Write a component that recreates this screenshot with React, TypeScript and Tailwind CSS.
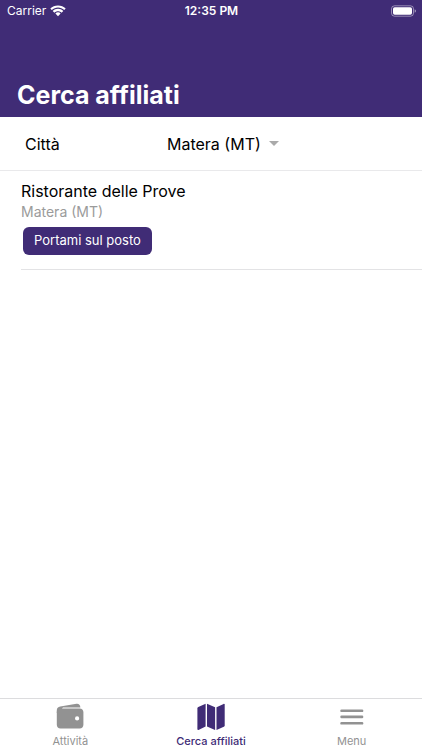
import { ReactNode, useState } from "react";

type Affiliate = {
  id: number;
  name: string;
  city: string;
};

const CITIES = ["Matera (MT)"];

const AFFILIATES: Affiliate[] = [
  { id: 1, name: "Ristorante delle Prove", city: "Matera (MT)" },
];

function WifiIcon() {
  return (
    <svg className="w-4 h-3" viewBox="0 0 16 12" fill="currentColor" aria-hidden="true">
      <path d="M8 .4C5 .4 2.300 1.500.3 3.500l1.500 1.600C3.500 3.500 5.600 2.600 8 2.600s4.500.9 6.200 2.500l1.500-1.600C13.700 1.500 11 .4 8 .4z" />
      <path d="M8 3.700c-2 0-3.800.7-5.300 2.200l1.700 1.800C5.400 6.700 6.600 6.200 8 6.200s2.600.5 3.600 1.500l1.700-1.800C11.800 4.400 10 3.700 8 3.700z" />
      <path d="M8 7.300c-1 0-1.900.4-2.600 1.100L8 11.300l2.600-2.900C9.900 7.700 9 7.300 8 7.300z" />
    </svg>
  );
}

function BatteryIcon() {
  return (
    <svg className="w-[25px] h-3" viewBox="0 0 25 12" aria-hidden="true">
      <rect x=".5" y=".8" width="22" height="10.400" rx="3" fill="none" stroke="#fff" strokeOpacity=".45" />
      <rect x="2" y="2.300" width="19" height="7.400" rx="1.700" fill="#fff" />
      <path d="M23.700 4.300c.8.300 1.200.9 1.200 1.700s-.4 1.400-1.200 1.700z" fill="#fff" fillOpacity=".6" />
    </svg>
  );
}

function WalletIcon() {
  return (
    <svg className="w-7 h-7" viewBox="0 0 28 28" fill="currentColor" aria-hidden="true">
      <path d="M.8 10V7.300c0-2.200 1.300-3.500 3.400-3.800l16.300-2.700c2.300-.3 3.700 1.100 3.900 3.600H8C6.500 4.400 6 5 6 6.500L4 10z" />
      <path
        fillRule="evenodd"
        d="M4.500 5.400h19.200c2.200 0 3.700 1.500 3.700 3.700v12.700c0 2.200-1.500 3.700-3.700 3.700H4.500C2.300 25.500.8 24 .8 21.800V9.100c0-2.200 1.500-3.700 3.700-3.700zm16.600 7.900a2.100 2.100 0 1 0 0 4.200 2.100 2.100 0 0 0 0-4.200z"
      />
    </svg>
  );
}

function MapIcon() {
  return (
    <svg className="w-7 h-7" viewBox="0 0 28 28" fill="currentColor" aria-hidden="true">
      <path d="M1.300 4 8.600.8v22.600L1.500 27c-.5.200-1.100-.1-1.100-.7V5.500c0-.7.3-1.200.9-1.500z" />
      <path d="M10 .8 18.100 4.300v22.800L10 23.400z" />
      <path d="M19.500 4.300 26.600.9c.5-.2 1.100.1 1.100.7v20.600c0 .7-.3 1.200-.9 1.500l-7.300 3.400z" />
    </svg>
  );
}

function MenuIcon() {
  return (
    <svg className="w-7 h-7" viewBox="0 0 28 28" fill="currentColor" aria-hidden="true">
      <rect x="2.300" y="6.400" width="23" height="2.700" rx="1.200" />
      <rect x="2.300" y="12.600" width="23" height="2.700" rx="1.200" />
      <rect x="2.300" y="18.900" width="23" height="2.700" rx="1.200" />
    </svg>
  );
}

function StatusBar() {
  return (
    <div className="grid grid-cols-3 items-center h-[22px] pl-[7px] pr-[6px] text-xs">
      <div className="flex items-center gap-1">
        <span>Carrier</span>
        <WifiIcon />
      </div>
      <span className="text-center font-semibold">12:35 PM</span>
      <div className="flex justify-end">
        <BatteryIcon />
      </div>
    </div>
  );
}

function AffiliateRow({ affiliate }: { affiliate: Affiliate }) {
  return (
    <li className="ml-[21px] pt-[9px] pb-[14px] border-b border-[#e3e3e5]">
      <h2 className="text-base leading-[22px]">{affiliate.name}</h2>
      <p className="text-sm leading-5 text-[#9b9b9b]">{affiliate.city}</p>
      <button
        type="button"
        className="block mt-[5px] ml-0.5 h-7 px-[11px] rounded-md bg-[#402c76] text-[13px] text-white"
      >
        Portami sul posto
      </button>
    </li>
  );
}

function TabItem({
  label,
  icon,
  active,
  onClick,
}: {
  label: string;
  icon: ReactNode;
  active: boolean;
  onClick: () => void;
}) {
  return (
    <button
      type="button"
      onClick={onClick}
      aria-current={active ? "page" : undefined}
      className={`flex flex-1 flex-col items-center gap-0.5 text-[11px] leading-4 ${
        active ? "font-medium text-[#402c76]" : "text-[#929292]"
      }`}
    >
      {icon}
      <span>{label}</span>
    </button>
  );
}

export default function App() {
  const [city, setCity] = useState(CITIES[0]);
  const [tab, setTab] = useState("search");

  const results = AFFILIATES.filter((a) => a.city === city);

  return (
    <div className="flex flex-col min-h-screen bg-white text-black font-[Inter,sans-serif]">
      {/* Header */}
      <header className="bg-[#402c76] text-white">
        <StatusBar />
        <h1 className="pt-[57px] pb-[5px] px-[17px] text-[25px] leading-[33px] font-bold">
          Cerca affiliati
        </h1>
      </header>

      {/* City filter */}
      <div className="flex items-center h-[54px] pl-[25px] border-b border-[#e9e9eb] text-base">
        <label htmlFor="city" className="w-[142px]">
          Città
        </label>
        <div className="flex items-center gap-2">
          <select
            id="city"
            value={city}
            onChange={(e) => setCity(e.target.value)}
            className="appearance-none bg-transparent"
          >
            {CITIES.map((c) => (
              <option key={c}>{c}</option>
            ))}
          </select>
          <svg className="w-[10px] h-[5px]" viewBox="0 0 10 5" fill="#aaaaaa" aria-hidden="true">
            <path d="M0 0h10L5 5z" />
          </svg>
        </div>
      </div>

      {/* Results */}
      <main className="flex-1">
        <ul>
          {results.map((a) => (
            <AffiliateRow key={a.id} affiliate={a} />
          ))}
        </ul>
      </main>

      {/* Tab bar */}
      <nav className="flex pt-1 pb-[1px] border-t border-[#dcdcde]">
        <TabItem
          label="Attività"
          icon={<WalletIcon />}
          active={tab === "activity"}
          onClick={() => setTab("activity")}
        />
        <TabItem
          label="Cerca affiliati"
          icon={<MapIcon />}
          active={tab === "search"}
          onClick={() => setTab("search")}
        />
        <TabItem
          label="Menu"
          icon={<MenuIcon />}
          active={tab === "menu"}
          onClick={() => setTab("menu")}
        />
      </nav>
    </div>
  );
}
